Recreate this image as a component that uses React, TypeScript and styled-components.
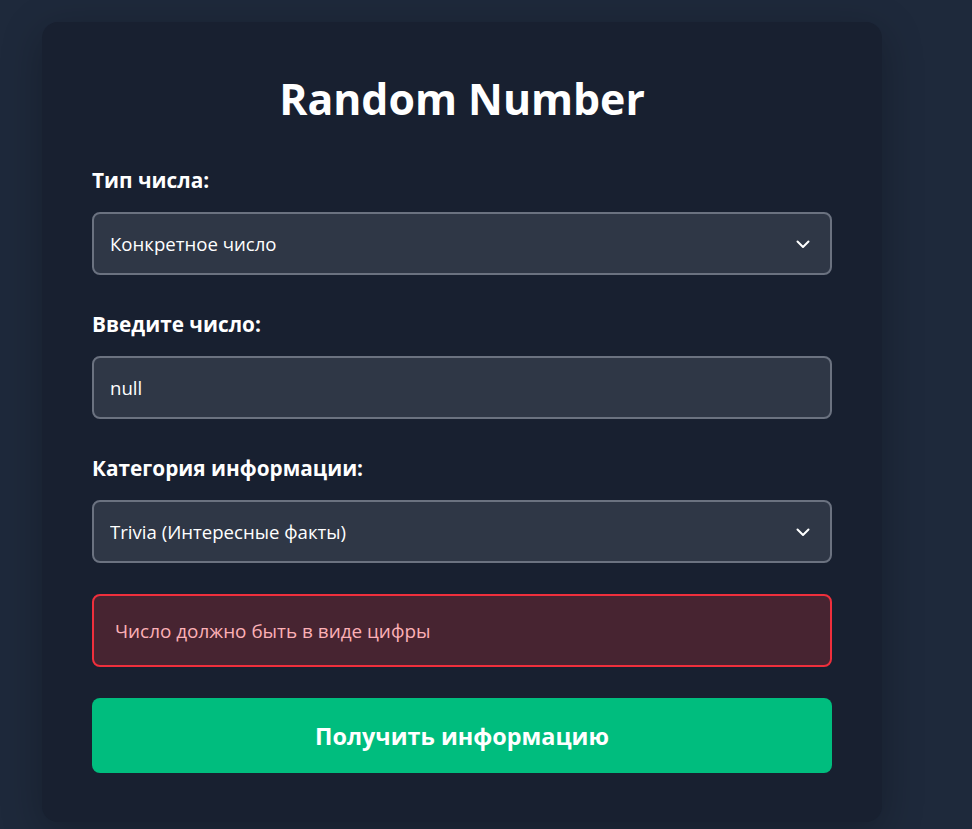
import React from "react";
import styled, { createGlobalStyle } from "styled-components";

const Global = createGlobalStyle`
  html, body { margin: 0; padding: 0; }
  body {
    background: #1e293b;
    font-family: "Open Sans", "Noto Sans", Arial, sans-serif;
    color: #ffffff;
    min-height: 829px;
  }
  * { box-sizing: border-box; }
`;

const Page = styled.div`
  padding: 22px 0 0 42px;
`;

const Card = styled.div`
  width: 840px;
  background: #182030;
  border-radius: 16px;
  padding: 48px 50px 49px;
  box-shadow: 0 10px 40px rgba(0, 0, 0, 0.25);
`;

const Title = styled.h1`
  margin: 0 0 38px;
  text-align: center;
  font-size: 42.8px;
  line-height: 57px;
  font-weight: 700;
  color: #ffffff;
`;

const Group = styled.div<{ $last?: boolean }>`
  display: flex;
  flex-direction: column;
  gap: 17px;
  margin-bottom: ${(p) => (p.$last ? "0" : "34px")};
`;

const Label = styled.label`
  font-size: 20.8px;
  line-height: 30px;
  font-weight: 700;
  color: #ffffff;
`;

const Field = styled.div`
  position: relative;
`;

const fieldBase = `
  width: 100%;
  height: 63px;
  padding: 0 16px;
  border: 2px solid #6b7280;
  border-radius: 8px;
  background: #2f3746;
  color: #ffffff;
  font-family: "Open Sans", "Noto Sans", Arial, sans-serif;
  font-size: 18.6px;
  outline: none;
`;

const Select = styled.select`
  ${fieldBase}
  appearance: none;
  -webkit-appearance: none;
`;

const Input = styled.input`
  ${fieldBase}
`;

const Chevron = styled.svg`
  position: absolute;
  right: 21px;
  top: 50%;
  transform: translateY(-50%);
  width: 16px;
  height: 16px;
  pointer-events: none;
`;

const ErrorBox = styled.div`
  margin-top: 31px;
  height: 73px;
  display: flex;
  align-items: center;
  padding: 0 21px;
  border: 2px solid #ef2f3c;
  border-radius: 8px;
  background: #472431;
  color: #fcb0b6;
  font-size: 18.9px;
`;

const Button = styled.button`
  margin-top: 31px;
  width: 100%;
  height: 75px;
  border: none;
  border-radius: 8px;
  background: #00bd7e;
  color: #ffffff;
  font-family: "Open Sans", "Noto Sans", Arial, sans-serif;
  font-size: 23.4px;
  font-weight: 700;
  cursor: pointer;
`;

const ChevronIcon = () => (
  <Chevron viewBox="0 0 16 16" fill="none">
    <path d="M2.5 5.5 L8 11 L13.5 5.5" stroke="#ffffff" strokeWidth="2" strokeLinecap="round" strokeLinejoin="round" />
  </Chevron>
);

export default function App() {
  return (
    <>
      <Global />
      <Page>
        <Card>
          <Title>Random Number</Title>
          <Group>
            <Label htmlFor="type">Тип числа:</Label>
            <Field>
              <Select id="type" defaultValue="specific">
                <option value="specific">Конкретное число</option>
                <option value="random">Случайное число</option>
              </Select>
              <ChevronIcon />
            </Field>
          </Group>
          <Group>
            <Label htmlFor="num">Введите число:</Label>
            <Field>
              <Input id="num" defaultValue="null" />
            </Field>
          </Group>
          <Group $last>
            <Label htmlFor="cat">Категория информации:</Label>
            <Field>
              <Select id="cat" defaultValue="trivia">
                <option value="trivia">Trivia (Интересные факты)</option>
                <option value="math">Math</option>
                <option value="date">Date</option>
                <option value="year">Year</option>
              </Select>
              <ChevronIcon />
            </Field>
          </Group>
          <ErrorBox>Число должно быть в виде цифры</ErrorBox>
          <Button>Получить информацию</Button>
        </Card>
      </Page>
    </>
  );
}
